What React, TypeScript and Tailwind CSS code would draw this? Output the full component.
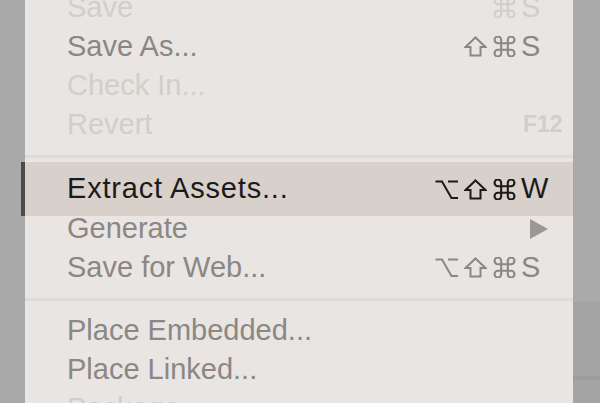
import React from "react";

type Mod = "opt" | "shift" | "cmd";

type Item = {
  label: string;
  state: "disabled" | "enabled" | "active";
  mods?: Mod[];
  keyName?: string;
  submenu?: boolean;
  fkey?: string;
};

const topItems: Item[] = [
  { label: "Save", state: "disabled", mods: ["cmd"], keyName: "S" },
  { label: "Save As...", state: "enabled", mods: ["shift", "cmd"], keyName: "S" },
  { label: "Check In...", state: "disabled" },
  { label: "Revert", state: "disabled", fkey: "F12" },
];

const midItems: Item[] = [
  { label: "Generate", state: "enabled", submenu: true },
  { label: "Save for Web...", state: "enabled", mods: ["opt", "shift", "cmd"], keyName: "S" },
];

const lowItems: Item[] = [
  { label: "Place Embedded...", state: "enabled" },
  { label: "Place Linked...", state: "enabled" },
  { label: "Package...", state: "disabled" },
];

const colors = {
  disabled: "text-[#d2cecb]",
  enabled: "text-[#8b8785]",
  active: "text-[#1d1a1a]",
};

// keyboard modifier symbols
function ModIcon({ mod }: { mod: Mod }) {
  if (mod === "shift") {
    return (
      <svg width="23" height="21" viewBox="0 0 23 21" fill="none" stroke="currentColor" strokeWidth="2" strokeLinejoin="miter">
        <path d="M11.5 1.5 L21.5 11 H16.5 V19.5 H6.5 V11 H1.5 Z" />
      </svg>
    );
  }
  if (mod === "cmd") {
    return (
      <svg width="23" height="21" viewBox="2.5 2.5 19 19" fill="none" stroke="currentColor" strokeWidth="1.9">
        <path d="M15 6v12a3 3 0 1 0 3-3H6a3 3 0 1 0 3 3V6a3 3 0 1 0-3 3h12a3 3 0 1 0-3-3" />
      </svg>
    );
  }
  return (
    <svg width="23" height="21" viewBox="0 0 23 21" fill="none" stroke="currentColor" strokeWidth="2">
      <path d="M0.5 2.5 H7 L16.5 19 H23" />
      <path d="M13 2.5 H23" />
    </svg>
  );
}

function Shortcut({ item }: { item: Item }) {
  const color = colors[item.state];
  if (item.submenu) {
    return (
      <div className="flex w-[30px] justify-start pl-[9px]">
        <svg width="18" height="20" viewBox="0 0 18 20">
          <polygon points="0,0 18,10 0,20" fill="#9b9794" />
        </svg>
      </div>
    );
  }
  if (item.fkey) {
    return (
      <div className="w-[30px] pl-[2px]">
        <span className={`whitespace-nowrap text-[23px] font-bold ${color}`}>{item.fkey}</span>
      </div>
    );
  }
  return (
    <div className={`flex items-center ${color}`}>
      <div className="flex items-center justify-end gap-[6px]">
        {(item.mods ?? []).map((m, i) => (
          <ModIcon key={i} mod={m} />
        ))}
      </div>
      <span className="ml-[5px] w-[30px] text-[29px]">{item.keyName}</span>
    </div>
  );
}

function Row({ item }: { item: Item }) {
  return (
    <div className={`flex h-[39px] items-center pl-[42px] pr-[22px] ${colors[item.state]}`}>
      <span className="flex-1 whitespace-nowrap text-[29px] leading-[39px]">{item.label}</span>
      <Shortcut item={item} />
    </div>
  );
}

function Separator({ top, bottom }: { top: number; bottom: number }) {
  return (
    <div style={{ paddingTop: top, paddingBottom: bottom }}>
      <div className="h-[3px] bg-[#dfdbd8]" />
    </div>
  );
}

export default function App() {
  return (
    <div className="flex h-[403px] w-[600px] overflow-hidden bg-[#a8a8a8] font-['Liberation_Sans',Arial,sans-serif]">
      <div className="w-[25px] shrink-0 bg-[#a9a9a9]" />
      <div className="w-[548px] shrink-0 bg-[#e9e5e2]">
        <div className="-mt-[12px]">
          {topItems.map((it) => (
            <Row key={it.label} item={it} />
          ))}
          <Separator top={11} bottom={4} />

          {/* highlighted item */}
          <div className="-mx-[4px] -mb-[7px] flex h-[54px] items-center border-x-4 border-[#4b4b4b] bg-[#d7d0cb] pl-[42px] pr-[22px] text-[#1d1a1a]">
            <span className="flex-1 whitespace-nowrap text-[29px] tracking-[0.8px]">Extract Assets...</span>
            <Shortcut item={{ label: "", state: "active", mods: ["opt", "shift", "cmd"], keyName: "W" }} />
          </div>

          {midItems.map((it) => (
            <Row key={it.label} item={it} />
          ))}
          <Separator top={11} bottom={10} />
          {lowItems.map((it) => (
            <Row key={it.label} item={it} />
          ))}
        </div>
      </div>
      <div className="flex w-[27px] shrink-0 flex-col">
        <div className="h-[302px] bg-[#aaaaaa]" />
        <div className="h-[74px] bg-[#a4a4a4]" />
        <div className="h-[4px] bg-[#9c9c9c]" />
        <div className="flex-1 bg-[#a4a4a4]" />
      </div>
    </div>
  );
}
